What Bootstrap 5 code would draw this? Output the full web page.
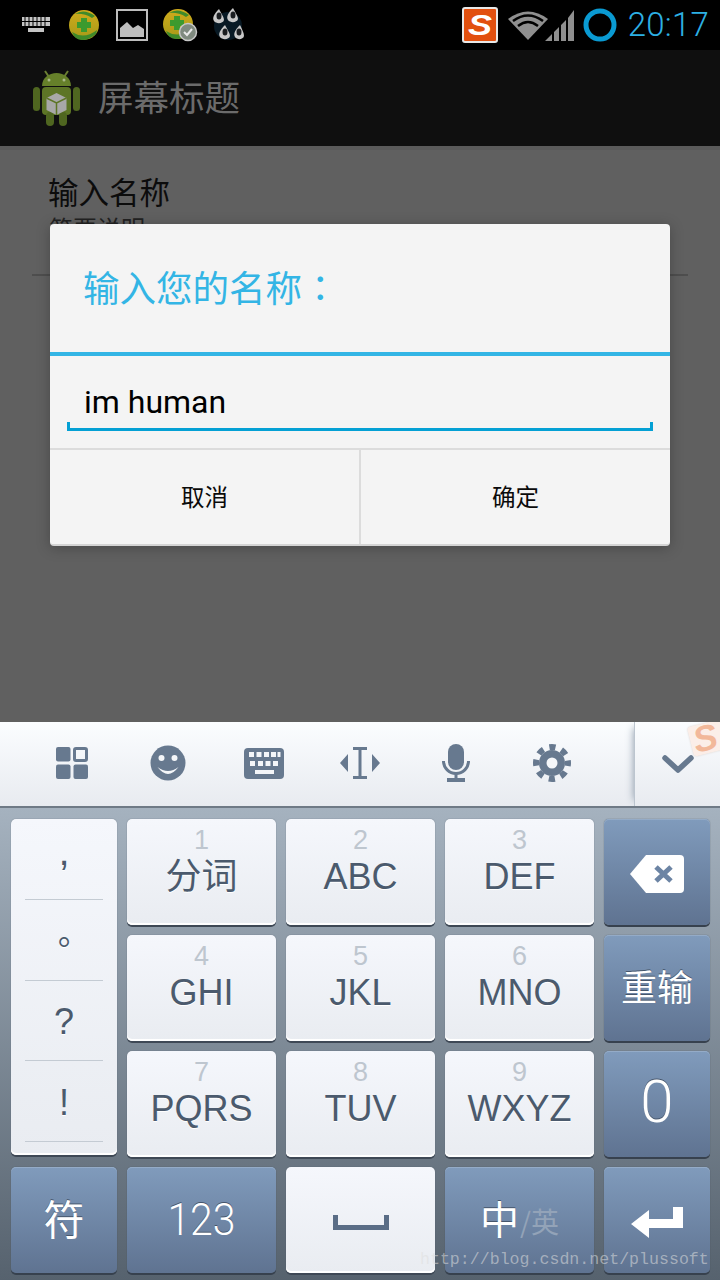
<!DOCTYPE html>
<html lang="zh">
<head>
<meta charset="UTF-8">
<title>输入名称</title>
<link href="https://cdn.jsdelivr.net/npm/bootstrap@5.3.0/dist/css/bootstrap.min.css" rel="stylesheet">
<script src="https://cdn.jsdelivr.net/npm/bootstrap@5.3.0/dist/js/bootstrap.bundle.min.js"></script>
<style>
body { width: 720px; height: 1280px; overflow: hidden; background: #606060; font-family: "Roboto", "Noto Sans CJK SC", sans-serif; }
svg { display: block; flex: none; }

/* status bar */
.status-bar { height: 50px; background: #000; padding-left: 22px; }
.status-left { gap: 15px; }
.gap-a { margin-right: 4px; }
.gap-b { margin-right: 2px; }
.gap-c { margin-right: -1px; }
.clock { font-size: 33px; font-weight: 300; color: #2db0e4; margin-left: 11px; margin-right: 11px; line-height: 50px; letter-spacing: .2px; }
.sogou-tile { width: 36px; height: 36px; margin-right: 10px; background: #e2500f; border: 2px solid #e8e8e8; border-radius: 3px; color: #fff; font: italic 700 30px/31px "Liberation Sans", sans-serif; text-align: center; }
.sogou-tile span { display: inline-block; transform: scaleX(1.2); }
.signal-icon { margin-left: -3px; }

/* action bar */
.action-bar { height: 96px; background: #0f0f0f; padding-left: 33px; gap: 18px; }
.action-title { font-size: 35.5px; color: #6b6b6b; line-height: 1; padding-top: 4px; }
.action-line { height: 4px; background: #5a5a5a; }

/* page under the dialog */
.page-area { height: 572px; padding: 24px 32px 0; }
.page-head { font-size: 30.5px; line-height: 40px; color: #0c0c0c; margin-left: 16px; }
.page-sub { font-size: 24px; line-height: 32px; color: #222; margin-left: 17px; }
.page-rule { height: 2px; background: #4e4e4e; margin-top: 28px; }

/* dialog */
.name-dialog { position: absolute; left: 50px; top: 224px; width: 620px; height: 322px; background: #f4f4f4; box-shadow: 0 2px 14px rgba(0,0,0,.25); border-bottom: 2px solid #d4d4d4 !important; }
.dialog-title { height: 132px; padding: 42px 33px 0; font-size: 36.5px; line-height: 42px; color: #33b5e5; border-bottom: 4px solid #33b5e5; white-space: nowrap; }
.title-colon { font-family: "Noto Sans CJK TC", sans-serif; }
.name-field { width: auto; margin: 0 17px; height: 75px; padding: 26px 17px 0; font-size: 32px; line-height: 40px; color: #000; background: transparent; border: 0; border-radius: 0; position: relative; border-bottom: 3px solid #04a0d4; }
.name-field::before, .name-field::after { content: ""; position: absolute; bottom: -3px; width: 3px; height: 9px; background: #04a0d4; }
.name-field::before { left: 0; }
.name-field::after { right: 0; }
.dialog-btns { margin-top: 17px; height: 96px; border-top: 2px solid #dcdcdc; }
.dialog-btn { flex: 1; border: 0; border-radius: 0; font-size: 23.5px; color: #0a0a0a; font-family: "Noto Sans CJK SC", sans-serif; padding: 0; background: transparent; }
.dialog-btn + .dialog-btn { border-left: 2px solid #dcdcdc; }

/* keyboard */
.kb-tools { height: 86px; background: linear-gradient(#fbfdff, #e8ebf0); border-bottom: 2px solid #6f7a86; padding-left: 24px; align-items: flex-start; }
.tool-cell { width: 96px; height: 82px; }
.tool-close { width: 86px; height: 84px; margin-left: auto; border-left: 1px solid #bcc5cf; box-shadow: -6px 0 8px -6px #8a98a8; background: linear-gradient(#fbfdff, #e8ebf0); overflow: hidden; position: relative; }
.kb-body { height: 472px; padding: 11px 0 0 11px; background: linear-gradient(#a5b2bf, #56626e); display: grid; grid-template-columns: 106px 149px 149px 149px 106px; grid-auto-rows: 106px; gap: 10px; }
.kb-key { border-radius: 5px; font-family: "Liberation Sans", "Noto Sans CJK SC", sans-serif; line-height: 1; }
.key-light { background: linear-gradient(#f5f7fc, #e9ecf1); color: #4b5a6d; box-shadow: inset 0 -2px 0 #fff, 0 2px 0 #3e4855, 0 0 1px #4b5663; text-shadow: 0 1px 0 #fff; }
.key-dark { background: linear-gradient(#809bbc, #5f7391); color: #fff; box-shadow: inset 0 1px 0 #94abc7, 0 2px 0 #37414e, 0 0 1px #3c4653; text-shadow: 0 -1px 0 #46566c; }
.key-num { font-size: 27px; color: #bec6cf; height: 27px; margin-top: 8px; text-shadow: none; }
.key-main { font-size: 36px; height: 42px; margin-top: 5px; }
.key-main.key-ch { margin-top: 1px; }
.punct-col { grid-row: span 3; height: 336px; padding: 0 14px; }
.punct-cell { height: 80.75px; font-size: 36px; border-bottom: 1px solid #c4cbd3; }
.punct-comma { font-size: 40px; padding-bottom: 16px; }
.punct-dot { font-family: "Noto Sans CJK TC", sans-serif; font-size: 32px; }
.punct-low { padding-top: 4px; }
.key-big { font-size: 41px; }
.key-big > span.stretch-y { display: inline-block; font-family: "Roboto", sans-serif; font-weight: 300; transform: scaleY(1.1); }
.key-zero { font-family: "Roboto", sans-serif; font-size: 60px; font-weight: 300; }
.key-ch { font-family: "Noto Sans CJK SC", sans-serif; padding-bottom: 6px; }
.key-zh { font-size: 39px; margin-right: 1px; }
.lang-off { font-size: 28px; color: #93a3b8; text-shadow: none; margin-top: 8px; }

/* overlays */
.skin-badge { position: absolute; left: 55px; top: 0; width: 42px; height: 30px; background: #fbeee8; color: #f2b89a; font: italic 700 36px/30px "Liberation Sans", sans-serif; padding-left: 3px; transform: rotate(-14deg); border-radius: 3px; box-shadow: 0 0 2px #d9d4d0; }
.blog-mark { position: absolute; left: 420px; top: 1249px; font: 16.6px/22px "Liberation Mono", monospace; color: rgba(222,222,222,.55); white-space: nowrap; }
</style>
</head>
<body class="position-relative">

<!-- STATUS BAR -->
<div class="status-bar d-flex align-items-center">
    <div class="status-left d-flex align-items-center">
        <svg class="gap-a" width="28" height="16" viewBox="0 0 28 16" fill="#c4c4c4"><path d="M0 0h28v4H0zM0 5h28v4H0zM6 11h16v4H6z"/><path d="M3 0v9M7 0v9M11 0v9M15 0v9M19 0v9M23 0v9" stroke="#000" stroke-width="1"/></svg>
        <svg class="gap-b" width="30" height="30" viewBox="0 0 30 30"><defs><linearGradient id="g1" x1="0" y1="0" x2="0" y2="1"><stop offset="0" stop-color="#d1ab1c"/><stop offset="1" stop-color="#a69a18"/></linearGradient></defs><circle cx="15" cy="15" r="15" fill="url(#g1)"/><path d="M3 22Q15 30 28 20L27 24Q20 30 13 30T3 22ZM6 4Q15-2 26 6L23 8Q15 3 6 4Z" fill="#3f8a2a"/><path d="M12 8h6v4h4v6h-4v4h-6v-4H8v-6h4z" fill="#3c9a2e"/></svg>
        <svg width="32" height="32" viewBox="0 0 32 32"><rect x="1" y="1" width="30" height="30" fill="none" stroke="#bdbdbd" stroke-width="2"/><path d="M4 28V19l7-6 6 6 5-3 6 4v8z" fill="#bdbdbd"/></svg>
        <svg class="gap-c" width="35" height="33" viewBox="0 0 35 33"><circle cx="15" cy="15" r="15" fill="url(#g1)"/><path d="M3 22Q15 30 28 20L27 24Q20 30 13 30T3 22ZM6 4Q15-2 26 6L23 8Q15 3 6 4Z" fill="#3f8a2a"/><path d="M11 7h6v4h4v6h-4v4h-6v-4H7v-6h4z" fill="#3c9a2e"/><circle cx="25" cy="23" r="8.5" fill="#7f8a7f" stroke="#c8c8c8" stroke-width="1.5"/><path d="M21 23l3 3 5-6" fill="none" stroke="#e8e8e8" stroke-width="2"/></svg>
        <svg width="32" height="34" viewBox="0 0 32 34"><circle cx="16" cy="18" r="14" fill="#0d2a3c" opacity=".6"/><g fill="#c8c8c8"><path d="M7 1C2 6 0 10 2 13s9 3 10-1C12 9 9 5 7 1Z"/><path d="M21 0c-5 5-7 9-5 12s9 3 10-1c0-3-3-7-5-11Z"/><path d="M13 17c-5 5-7 9-5 12s9 3 10-1c0-3-3-7-5-11Z"/><path d="M28 17c-5 5-7 9-5 12s8 3 9-1c0-3-2-7-4-11Z"/></g><g fill="#1a1d20"><ellipse cx="7" cy="8" rx="2.500" ry="3.500"/><ellipse cx="21" cy="7" rx="2.500" ry="3.500"/><ellipse cx="13" cy="24" rx="2.500" ry="3.500"/><ellipse cx="27" cy="24" rx="2.500" ry="3.500"/></g></svg>
    </div>
    <div class="ms-auto d-flex align-items-center">
        <div class="sogou-tile"><span>S</span></div>
        <svg width="40" height="30" viewBox="0 0 40 30"><path d="M0 9Q20-6 40 9L20 30Z" fill="#8f8f8f"/><path d="M5 11Q20 0 35 11M10 16Q20 8 30 16" fill="none" stroke="#000" stroke-width="2.500"/></svg>
        <svg class="signal-icon" width="30" height="32" viewBox="0 0 30 32" fill="#8f8f8f"><path d="M0 32L7 25v7zM9 23l5-5v14H9zM16 16l5-5v21h-5zM23 9l6-8v31h-6z"/></svg>
        <svg class="ms-2" width="34" height="34" viewBox="0 0 34 34"><circle cx="17" cy="17" r="14" fill="none" stroke="#0a9ad2" stroke-width="5"/></svg>
        <div class="clock">20:17</div>
    </div>
</div>

<!-- ACTION BAR -->
<div class="action-bar d-flex align-items-center">
    <svg width="47" height="56" viewBox="0 0 47 56">
        <path d="M12 1l4 6M35 1l-4 6" stroke="#6b7f33" stroke-width="2"/>
        <path d="M9 16C9 8 16 3 23.500 3S38 8 38 16z" fill="#66802a"/>
        <circle cx="16" cy="10" r="1.500" fill="#a9b78a"/><circle cx="31" cy="10" r="1.500" fill="#a9b78a"/>
        <rect x="9" y="17" width="29" height="28" rx="4" fill="#5d7526"/>
        <rect x="0" y="17" width="7" height="24" rx="3.500" fill="#4f6620"/>
        <rect x="40" y="17" width="7" height="24" rx="3.500" fill="#4f6620"/>
        <rect x="13" y="42" width="8" height="14" rx="4" fill="#4f6620"/>
        <rect x="26" y="42" width="8" height="14" rx="4" fill="#4f6620"/>
        <path d="M23.500 23l10 5v12l-10 5-10-5V28z" fill="#a8a8a8"/>
        <path d="M13.500 28l10 5 10-5M23.500 33v12" fill="none" stroke="#5d7526" stroke-width="1.500"/>
    </svg>
    <div class="action-title">屏幕标题</div>
</div>
<div class="action-line"></div>

<!-- PAGE -->
<div class="page-area">
    <div class="page-head">输入名称</div>
    <div class="page-sub">简要说明</div>
    <div class="page-rule"></div>
</div>

<!-- DIALOG -->
<div class="name-dialog card rounded-1 border-0">
    <div class="dialog-title">输入您的名称<span class="title-colon" lang="zh-TW">：</span></div>
    <div class="name-field form-control">im human</div>
    <div class="dialog-btns d-flex">
        <button type="button" class="dialog-btn btn">取消</button>
        <button type="button" class="dialog-btn btn">确定</button>
    </div>
</div>

<!-- KEYBOARD TOOLBAR -->
<div class="kb-tools d-flex">
    <div class="tool-cell d-flex align-items-center justify-content-center">
        <svg width="32" height="32" viewBox="0 0 32 32" fill="#67798f"><rect width="14.500" height="14.500" rx="2"/><rect x="18.500" y="1.500" width="12" height="12" rx="1.500" fill="none" stroke="#67798f" stroke-width="3"/><rect y="17.500" width="14.500" height="14.500" rx="2"/><rect x="17.500" y="17.500" width="14.500" height="14.500" rx="2"/></svg>
    </div>
    <div class="tool-cell d-flex align-items-center justify-content-center">
        <svg width="36" height="36" viewBox="0 0 36 36"><circle cx="18" cy="18" r="17.500" fill="#67798f"/><circle cx="11.500" cy="13" r="3" fill="#f4f6f9"/><circle cx="24.500" cy="13" r="3" fill="#f4f6f9"/><path d="M7.500 22Q18 30 28.500 22Q18 36 7.500 22Z" fill="#f4f6f9"/></svg>
    </div>
    <div class="tool-cell d-flex align-items-center justify-content-center">
        <svg width="40" height="31" viewBox="0 0 40 31"><rect width="40" height="31" rx="4" fill="#67798f"/><g fill="#f4f6f9"><rect x="5" y="4" width="5" height="5"/><rect x="12.500" y="4" width="5" height="5"/><rect x="20" y="4" width="5" height="5"/><rect x="27" y="4" width="5" height="5"/><rect x="33.500" y="4" width="3" height="5"/><rect x="6" y="13" width="5" height="5"/><rect x="14" y="13" width="5" height="5"/><rect x="21.500" y="13" width="5" height="5"/><rect x="29" y="13" width="5" height="5"/><rect x="11" y="22" width="19" height="4"/></g></svg>
    </div>
    <div class="tool-cell d-flex align-items-center justify-content-center">
        <svg width="40" height="32" viewBox="0 0 40 32" fill="#67798f"><path d="M8 7v18L0 16zM32 7v18l8-9z"/><path d="M13 1.500h14M13 30.500h14M20 1.500v29" fill="none" stroke="#67798f" stroke-width="3"/></svg>
    </div>
    <div class="tool-cell d-flex align-items-center justify-content-center">
        <svg width="28" height="38" viewBox="0 0 28 38" fill="#67798f"><rect x="6" y="0" width="16" height="26" rx="8"/><path d="M1.500 17a12.500 12.500 0 0 0 25 0" fill="none" stroke="#67798f" stroke-width="3"/><path d="M12.500 29h3v5h-3zM5 34h18v4H5z"/></svg>
    </div>
    <div class="tool-cell d-flex align-items-center justify-content-center">
        <svg width="38" height="38" viewBox="0 0 38 38"><circle cx="19" cy="19" r="13" fill="#67798f"/><circle cx="19" cy="19" r="16" fill="none" stroke="#67798f" stroke-width="6" stroke-dasharray="6.280 6.280" stroke-dashoffset="3.140"/><circle cx="19" cy="19" r="5.500" fill="#f4f6f9"/></svg>
    </div>
    <div class="tool-close d-flex align-items-center justify-content-center">
        <svg width="32" height="19" viewBox="0 0 32 19"><path d="M3 3l13 12L29 3" fill="none" stroke="#67798f" stroke-width="5.500" stroke-linecap="round" stroke-linejoin="round"/></svg>
        <div class="skin-badge">S</div>
    </div>
</div>

<!-- KEYS -->
<div class="kb-body">
    <div class="kb-key key-light punct-col d-flex flex-column">
        <div class="punct-cell punct-comma d-flex align-items-center justify-content-center">,</div>
        <div class="punct-cell punct-dot d-flex align-items-center justify-content-center" lang="zh-TW">。</div>
        <div class="punct-cell punct-low d-flex align-items-center justify-content-center">?</div>
        <div class="punct-cell punct-low d-flex align-items-center justify-content-center">!</div>
    </div>
    <div class="kb-key key-light d-flex flex-column align-items-center"><div class="key-num">1</div><div class="key-main key-ch">分词</div></div>
    <div class="kb-key key-light d-flex flex-column align-items-center"><div class="key-num">2</div><div class="key-main">ABC</div></div>
    <div class="kb-key key-light d-flex flex-column align-items-center"><div class="key-num">3</div><div class="key-main">DEF</div></div>
    <div class="kb-key key-dark pt-1 d-flex align-items-center justify-content-center">
        <svg width="54" height="38" viewBox="0 0 54 38"><path d="M16 0h34q4 0 4 4v30q0 4-4 4H16L0 19z" fill="#fff"/><path d="M26 12l15 14M41 12L26 26" stroke="#6c84a4" stroke-width="5"/></svg>
    </div>

    <div class="kb-key key-light d-flex flex-column align-items-center"><div class="key-num">4</div><div class="key-main">GHI</div></div>
    <div class="kb-key key-light d-flex flex-column align-items-center"><div class="key-num">5</div><div class="key-main">JKL</div></div>
    <div class="kb-key key-light d-flex flex-column align-items-center"><div class="key-num">6</div><div class="key-main">MNO</div></div>
    <div class="kb-key key-dark key-ch key-main d-flex align-items-center justify-content-center h-100 mt-0">重输</div>

    <div class="kb-key key-light d-flex flex-column align-items-center"><div class="key-num">7</div><div class="key-main">PQRS</div></div>
    <div class="kb-key key-light d-flex flex-column align-items-center"><div class="key-num">8</div><div class="key-main">TUV</div></div>
    <div class="kb-key key-light d-flex flex-column align-items-center"><div class="key-num">9</div><div class="key-main">WXYZ</div></div>
    <div class="kb-key key-dark key-zero pb-1 d-flex align-items-center justify-content-center">0</div>

    <div class="kb-key key-dark key-big key-ch d-flex align-items-center justify-content-center">符</div>
    <div class="kb-key key-dark key-big d-flex align-items-center justify-content-center"><span class="stretch-y">123</span></div>
    <div class="kb-key key-light pt-1 d-flex align-items-center justify-content-center">
        <svg width="56" height="15" viewBox="0 0 56 15"><path d="M2.500 0v12.500h51V0" fill="none" stroke="#5a6d86" stroke-width="5"/></svg>
    </div>
    <div class="kb-key key-dark key-ch d-flex align-items-center justify-content-center"><span class="key-zh">中</span><span class="lang-off">/英</span></div>
    <div class="kb-key key-dark pt-1 d-flex align-items-center justify-content-center">
        <svg width="52" height="31" viewBox="0 0 52 31"><path d="M42 0h10v21H18v10L0 17 18 3v9h24z" fill="#fff"/></svg>
    </div>
</div>

<div class="blog-mark">http://blog.csdn.net/plussoft</div>

</body>
</html>
